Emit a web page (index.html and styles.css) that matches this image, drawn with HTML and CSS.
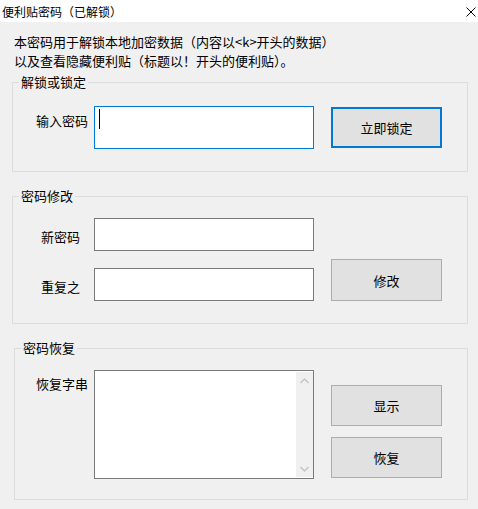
FILE: index.html
```html
<!DOCTYPE html>
<html lang="zh-CN">

<head>
    <meta charset="UTF-8">
    <meta name="viewport" content="width=device-width, initial-scale=1.0">
    <title>便利贴密码</title>
    <link rel="stylesheet" href="styles.css">
</head>

<body>
    <div class="titlebar">
        <span class="titlebar__text">便利贴密码（已解锁）</span>
        <svg class="titlebar__close" width="10" height="10" viewBox="0 0 10 10">
            <path d="M0.5 0.5 L9.5 9.5 M9.5 0.5 L0.5 9.5" stroke="#000" stroke-width="1" fill="none" />
        </svg>
    </div>

    <div class="client">
        <p class="intro">本密码用于解锁本地加密数据（内容以&lt;k&gt;开头的数据）<br>以及查看隐藏便利贴（标题以！开头的便利贴）。</p>

        <fieldset class="group group--lock">
            <legend>解锁或锁定</legend>
            <label class="group__label">输入密码</label>
            <div class="field field--focus"><span class="field__caret"></span></div>
            <button class="btn btn--default" type="button">立即锁定</button>
        </fieldset>

        <fieldset class="group group--change">
            <legend>密码修改</legend>
            <label class="group__label" for="newPwd">新密码</label>
            <input class="field" type="password" id="newPwd">
            <label class="group__label group__label--row2" for="repeatPwd">重复之</label>
            <input class="field field--row2" type="password" id="repeatPwd">
            <button class="btn" type="button">修改</button>
        </fieldset>

        <fieldset class="group group--restore">
            <legend>密码恢复</legend>
            <label class="group__label" for="restoreStr">恢复字串</label>
            <div class="memo">
                <textarea class="memo__text" id="restoreStr"></textarea>
                <div class="memo__scroll">
                    <svg width="9" height="6" viewBox="0 0 9 6">
                        <path d="M0.5 5 L4.5 1 L8.5 5" stroke="#c4c4c4" stroke-width="1.4" fill="none" />
                    </svg>
                    <svg width="9" height="6" viewBox="0 0 9 6">
                        <path d="M0.5 1 L4.5 5 L8.5 1" stroke="#c4c4c4" stroke-width="1.4" fill="none" />
                    </svg>
                </div>
            </div>
            <div class="btn-stack">
                <button class="btn" type="button">显示</button>
                <button class="btn" type="button">恢复</button>
            </div>
        </fieldset>
    </div>
</body>

</html>
```

FILE: styles.css
```css
* {
    margin: 0;
    padding: 0;
    box-sizing: border-box;
}

body {
    width: 478px;
    height: 509px;
    overflow: hidden;
    background: #f0f0f0;
    font-family: "Noto Sans CJK SC", "Noto Sans", sans-serif;
    font-size: 13px;
    color: #000;
}

.titlebar {
    height: 22px;
    background: #fff;
    display: flex;
    align-items: center;
    justify-content: space-between;
    padding: 0 2px;
    font-size: 12px;
}

.titlebar__close {
    display: block;
    margin-top: 1px;
}

.client {
    padding-top: 10px;
}

.intro {
    padding-left: 14px;
    line-height: 19px;
}

.group {
    border: 1px solid #dcdcdc;
    margin: 16px 0 0 12px;
    width: 456px;
    display: grid;
    grid-template-columns: 81px 220px 111px;
    align-items: start;
}

.group legend {
    margin-left: 6px;
    padding: 0 2px;
    line-height: 16px;
}

.group__label {
    line-height: 19px;
    white-space: nowrap;
}

.btn {
    width: 111px;
    height: 41px;
    margin-left: 17px;
    border: 1px solid #adadad;
    background: #e1e1e1;
    font-family: inherit;
    font-size: 13px;
    color: #000;
}

.btn--default {
    border: 2px solid #0078d7;
}

.field {
    display: block;
    width: 220px;
    height: 33px;
    border: 1px solid #7a7a7a;
    background: #fff;
    outline: none;
}

/* unlock / lock */
.group--lock {
    margin-top: 4px;
    height: 98px;
    padding-top: 16px;
}

.group--lock .group__label {
    padding: 5px 0 0 23px;
}

.field--focus {
    height: 43px;
    border-color: #0078d7;
    padding: 2px 0 0 4px;
}

.field__caret {
    display: block;
    width: 1px;
    height: 20px;
    background: #000;
}

.group--lock .btn {
    margin-top: 1px;
}

/* change */
.group--change {
    height: 136px;
    padding-top: 14px;
    grid-template-rows: 33px 33px;
    row-gap: 17px;
}

.group--change .group__label {
    align-self: center;
    padding: 3px 0 0 28px;
}

.group__label--row2,
.field--row2 {
    grid-row: 2;
}

.group--change .btn {
    grid-column: 3;
    grid-row: 1 / 3;
    align-self: end;
    height: 42px;
}

/* restore */
.group--restore {
    margin-left: 14px;
    width: 454px;
    height: 160px;
    padding-top: 14px;
    grid-template-columns: 79px 220px 128px;
}

.group--restore .group__label {
    padding: 4px 0 0 21px;
}

.memo {
    width: 220px;
    height: 109px;
    border: 1px solid #7a7a7a;
    background: #fff;
    display: flex;
    padding: 1px 0 1px 0;
}

.memo__text {
    flex: 1;
    border: 0;
    resize: none;
    outline: none;
    background: #fff;
}

.memo__scroll {
    width: 17px;
    background: #f0f0f0;
    display: flex;
    flex-direction: column;
    justify-content: space-between;
    align-items: center;
    padding: 6px 0 5px;
}

.memo__scroll svg {
    display: block;
}

.btn-stack {
    display: flex;
    flex-direction: column;
    gap: 11px;
    margin-top: 15px;
}
```
